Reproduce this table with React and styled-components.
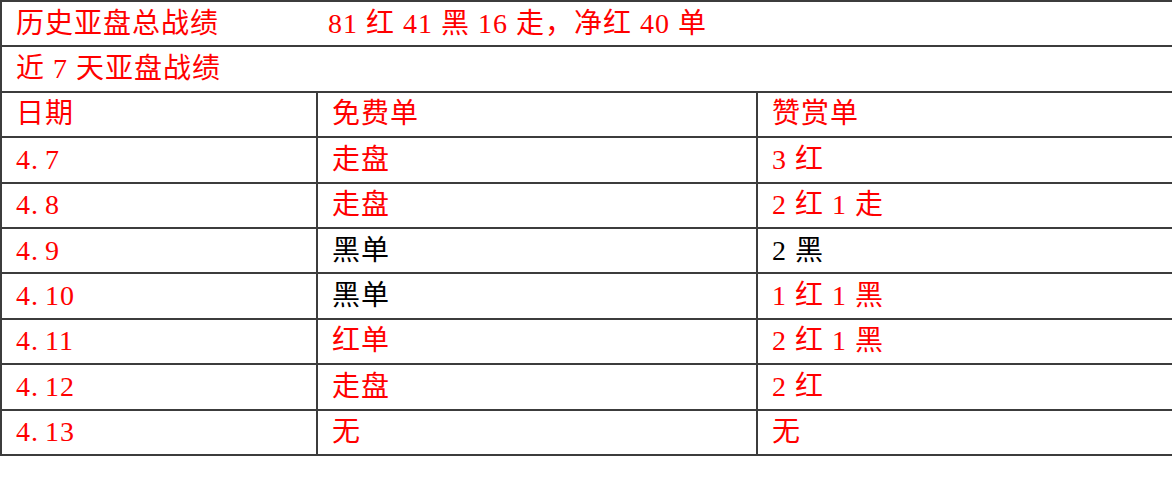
import React from "react";
import styled, { createGlobalStyle } from "styled-components";

const GlobalStyle = createGlobalStyle`
  html, body {
    margin: 0;
    padding: 0;
    background: #ffffff;
  }
  body {
    font-family: "Liberation Serif", "Noto Sans CJK SC", serif;
  }
`;

const RED = "#ff0000";
const INK = "#000000";

const rows = [
  { date: "4.7", free: "走盘", freeRed: true, paid: "3 红", paidRed: true },
  { date: "4.8", free: "走盘", freeRed: true, paid: "2 红 1 走", paidRed: true },
  { date: "4.9", free: "黑单", freeRed: false, paid: "2 黑", paidRed: false },
  { date: "4.10", free: "黑单", freeRed: false, paid: "1 红 1 黑", paidRed: true },
  { date: "4.11", free: "红单", freeRed: true, paid: "2 红 1 黑", paidRed: true },
  { date: "4.12", free: "走盘", freeRed: true, paid: "2 红", paidRed: true },
  { date: "4.13", free: "无", freeRed: true, paid: "无", paidRed: true },
];

export default function App() {
  return (
    <>
      <GlobalStyle />
      <Table>
        <TitleRow>
          <Label>历史亚盘总战绩</Label>
          <Text $red>81 红 41 黑 16 走，净红 40 单</Text>
        </TitleRow>
        <TitleRow>
          <Text $red>近 7 天亚盘战绩</Text>
        </TitleRow>
        <Row>
          <Cell>
            <Text $red>日期</Text>
          </Cell>
          <Cell $divider>
            <Text $red>免费单</Text>
          </Cell>
          <Cell $divider>
            <Text $red>赞赏单</Text>
          </Cell>
        </Row>
        {rows.map((r) => {
          const [day, num] = r.date.split(".");
          return (
            <Row key={r.date}>
              <Cell>
                <Text $red>
                  {day}
                  <Dot>.</Dot>
                  {num}
                </Text>
              </Cell>
              <Cell $divider>
                <Text $red={r.freeRed}>{r.free}</Text>
              </Cell>
              <Cell $divider>
                <Text $red={r.paidRed}>{r.paid}</Text>
              </Cell>
            </Row>
          );
        })}
      </Table>
    </>
  );
}

const Table = styled.div`
  width: 1176px;
  border: 2px solid #3c3c3c;
  border-bottom: none;
  box-sizing: border-box;
`;

const TitleRow = styled.div`
  display: flex;
  align-items: center;
  height: 45.4px;
  box-sizing: border-box;
  padding-left: 14px;
  border-bottom: 2px solid #3c3c3c;
`;

const Label = styled.span`
  flex: 0 0 312px;
  color: ${RED};
  font-size: 28px;
  letter-spacing: 1px;
  line-height: 1;
`;

const Row = styled.div`
  display: grid;
  grid-template-columns: 314px 440px 1fr;
  height: 45.4px;
  box-sizing: border-box;
  border-bottom: 2px solid #3c3c3c;
`;

const Cell = styled.div`
  display: flex;
  align-items: center;
  padding-left: 14px;
  box-sizing: border-box;
  border-left: ${(p) => (p.$divider ? "2px solid #3c3c3c" : "none")};
`;

const Text = styled.span`
  color: ${(p) => (p.$red ? RED : INK)};
  font-size: 28px;
  letter-spacing: 1px;
  word-spacing: 0;
  line-height: 1;
  white-space: pre;
`;

const Dot = styled.span`
  display: inline-block;
  width: 14px;
`;
